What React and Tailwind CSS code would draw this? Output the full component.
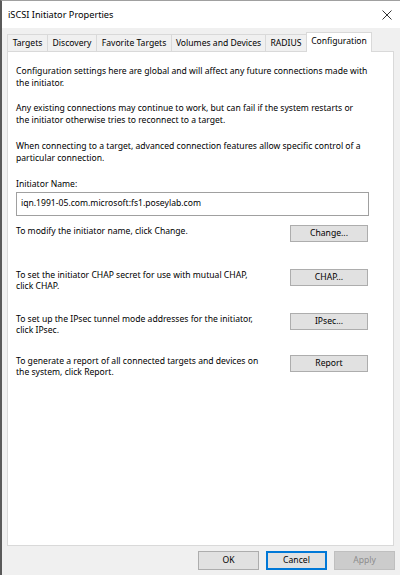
import React from "react";

const tabs = [
  { label: "Targets", w: "w-[41px]" },
  { label: "Discovery", w: "w-[50px]" },
  { label: "Favorite Targets", w: "w-[76px]" },
  { label: "Volumes and Devices", w: "w-[95px]" },
  { label: "RADIUS", w: "w-[42px]" },
];

function WinButton({ children }) {
  return (
    <button className="mt-[-1px] h-[17px] w-[78px] shrink-0 border border-[#adadad] bg-[#e1e1e1] text-[8.6px] leading-none text-black">
      {children}
    </button>
  );
}

function Row({ lines, button, className = "" }) {
  return (
    <div className={"flex items-start justify-between pr-[25px] " + className}>
      <p className="whitespace-nowrap leading-[11.5px]">
        {lines.map((l, i) => (
          <React.Fragment key={i}>
            {i > 0 && <br />}
            {l}
          </React.Fragment>
        ))}
      </p>
      <WinButton>{button}</WinButton>
    </div>
  );
}

export default function App() {
  return (
    <div
      className="flex h-[575px] w-[400px] flex-col border-l-2 border-t border-l-[#5a5a5a] border-t-[#a0a0a0] bg-[#f0f0f0] text-[8.6px] text-black"
      style={{ fontFamily: '"Noto Sans", "Open Sans", sans-serif' }}
    >
      {/* title bar */}
      <div className="flex h-[27px] items-center justify-between bg-white pl-[6px] pr-[8px]">
        <span className="text-[9.2px]">iSCSI Initiator Properties</span>
        <svg width="10" height="10" viewBox="0 0 10 10">
          <path d="M0.5 0.5 L9.5 9.5 M9.5 0.5 L0.5 9.5" stroke="#333" strokeWidth="1" />
        </svg>
      </div>

      {/* tabs */}
      <div className="mt-[4px] flex items-end pl-[5px]">
        {tabs.map((t) => (
          <div
            key={t.label}
            className={
              "-mr-px flex h-[17px] items-center justify-center border border-b-0 border-[#d9d9d9] bg-[#f0f0f0] " +
              t.w
            }
          >
            {t.label}
          </div>
        ))}
        <div className="relative z-10 -mb-px flex h-[20px] w-[66px] items-start justify-center border border-b-0 border-[#d9d9d9] bg-white pt-[2px]">
          Configuration
        </div>
      </div>

      {/* panel */}
      <div className="ml-[5px] h-[495px] w-[387px] border border-[#d9d9d9] bg-white pl-[8px] pt-[14px] leading-[11.5px]">
        <p className="whitespace-nowrap">
          Configuration settings here are global and will affect any future connections made with
          <br />
          the initiator.
        </p>
        <p className="mt-[14px] whitespace-nowrap">
          Any existing connections may continue to work, but can fail if the system restarts or
          <br />
          the initiator otherwise tries to reconnect to a target.
        </p>
        <p className="mt-[15px] whitespace-nowrap">
          When connecting to a target, advanced connection features allow specific control of a
          <br />
          particular connection.
        </p>

        <p className="mt-[15px]">Initiator Name:</p>
        <div className="mr-[24px] mt-[1px] flex h-[24px] items-start border border-[#a0a0a0] px-[4px] pt-[5px]">
          iqn.1991-05.com.microsoft:fs1.poseylab.com
        </div>

        <Row className="mt-[10px]" lines={["To modify the initiator name, click Change."]} button="Change..." />
        <Row
          className="mt-[28px]"
          lines={["To set the initiator CHAP secret for use with mutual CHAP,", "click CHAP."]}
          button="CHAP..."
        />
        <Row
          className="mt-[21px]"
          lines={["To set up the IPsec tunnel mode addresses for the initiator,", "click IPsec."]}
          button="IPsec..."
        />
        <Row
          className="mt-[19px]"
          lines={["To generate a report of all connected targets and devices on", "the system, click Report."]}
          button="Report"
        />
      </div>

      {/* bottom buttons */}
      <div className="flex justify-end gap-[7px] pr-[5px] pt-[5px]">
        <button className="h-[19px] w-[61px] border border-[#adadad] bg-[#e1e1e1] text-[8.6px]">OK</button>
        <button className="h-[19px] w-[61px] border-2 border-[#0078d7] bg-[#e1e1e1] text-[8.6px]">Cancel</button>
        <button className="h-[19px] w-[61px] border border-[#bfbfbf] bg-[#cccccc] text-[8.6px] text-[#8d8d8d]">Apply</button>
      </div>
    </div>
  );
}
